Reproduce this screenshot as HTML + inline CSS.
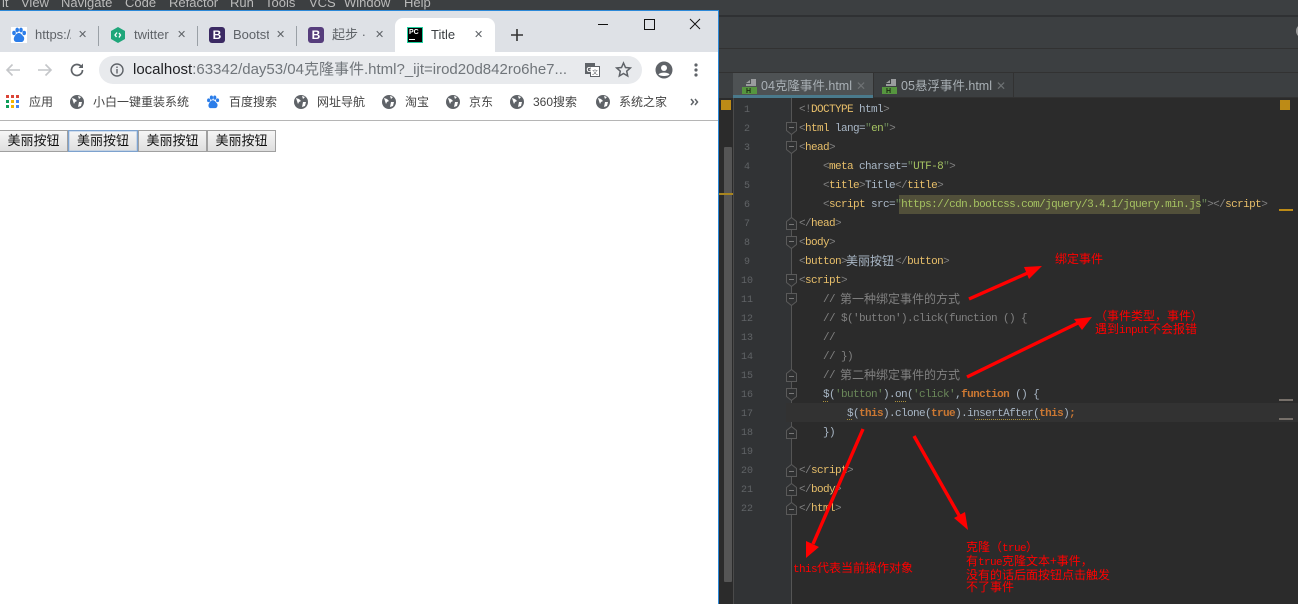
<!DOCTYPE html>
<html><head><meta charset="utf-8"><title>Title</title>
<style>
*{box-sizing:border-box}
html,body{margin:0;padding:0;width:1298px;height:604px;overflow:hidden;background:#2b2b2b;font-family:"Liberation Sans","Noto Sans CJK SC",sans-serif}
.a{position:absolute;white-space:nowrap}
#menu{left:0;top:0;width:1298px;height:10px;background:#3c3f41;overflow:hidden;color:#bbb;font-size:13px}
#menu span{position:absolute;top:-5px}
.tab{font-size:13px;color:#5f6368;top:27px;line-height:16px}
.x{font-size:11px;color:#5f6368;top:27px;line-height:16px}
.sep{width:1px;height:20px;background:#9aa0a6;top:26px}
.bm{font-size:12px;color:#444;top:95px;line-height:14px}
.globe{top:95px}
.btn{top:130px;height:22px;border:1px solid #a0a0a0;background:linear-gradient(#f6f6f6,#dedede);font-size:13px;line-height:20px;text-align:center;color:#111}
.ln{color:#606366;font:10px/19px "Liberation Mono",monospace;width:20px;left:737px;text-align:center;margin-top:1px}
.c{font:11px/19px "Liberation Mono","Noto Sans CJK SC",monospace;letter-spacing:-.6px;color:#a9b7c6;height:19px;margin-top:1px}
.t{color:#e8bf6a}.g{color:#6a8759}.n{color:#a9b7c6}.k{color:#cc7832;font-weight:bold}.m{color:#808080}.h{color:#a5c261}
.cj{font-family:"Noto Sans CJK SC",sans-serif;font-size:12px;line-height:1;letter-spacing:0;position:relative;top:1px;left:-1px}
.r{color:#f00;font-family:"Noto Sans CJK SC",sans-serif;font-size:12px;line-height:13px}
.r i{font:normal 11px "Liberation Mono",monospace;letter-spacing:-.6px}
</style></head><body>

<div class="a" id="menu">
<span style="left:2px">it</span><span style="left:21px">View</span><span style="left:61px">Navigate</span><span style="left:125px">Code</span><span style="left:169px">Refactor</span><span style="left:230px">Run</span><span style="left:265px">Tools</span><span style="left:309px">VCS</span><span style="left:344px">Window</span><span style="left:404px">Help</span>
</div>

<!-- IDE background -->
<div class="a" style="left:719px;top:10px;width:579px;height:88px;background:#3c3f41"></div>
<div class="a" style="left:0;top:15px;width:1298px;height:2px;background:#2f3133"></div>
<div class="a" style="left:719px;top:48px;width:579px;height:1px;background:#323232"></div>
<div class="a" style="left:719px;top:72px;width:579px;height:1px;background:#323232"></div>
<svg class="a" style="left:1290px;top:24px" width="8" height="14"><circle cx="13" cy="7" r="6" fill="none" stroke="#999" stroke-width="2"/></svg>

<!-- IDE tabs -->
<div class="a" style="left:719px;top:73px;width:14px;height:25px;background:#3c3f41"></div>
<div class="a" style="left:733px;top:73px;width:565px;height:25px;background:#3c3f41;border-bottom:1px solid #323232"></div>
<div class="a" style="left:733px;top:73px;width:140px;height:25px;background:#4e5254"></div>
<div class="a" style="left:733px;top:95px;width:140px;height:3px;background:#4a7a8c"></div>
<div class="a" style="left:873px;top:73px;width:1px;height:25px;background:#323232"></div>
<div class="a" style="left:1013px;top:73px;width:1px;height:25px;background:#323232"></div>
<svg class="a" style="left:742px;top:78px" width="16" height="17"><path d="M4 5l4-3v3zM9 1h5v7H4V6h5z" fill="#9a9c9e"/><rect x="0" y="9" width="15" height="7" fill="#56963f"/><text x="4" y="15" font-size="7" font-weight="bold" font-family="Liberation Sans" fill="#1c2a14">H</text></svg>
<svg class="a" style="left:882px;top:78px" width="16" height="17"><path d="M4 5l4-3v3zM9 1h5v7H4V6h5z" fill="#9a9c9e"/><rect x="0" y="9" width="15" height="7" fill="#56963f"/><text x="4" y="15" font-size="7" font-weight="bold" font-family="Liberation Sans" fill="#1c2a14">H</text></svg>
<div class="a" style="left:761px;top:78px;font-size:12.5px;line-height:16px;color:#a9b0b5">04克隆事件.html</div>
<div class="a" style="left:901px;top:78px;font-size:12.5px;line-height:16px;color:#a9b0b5">05悬浮事件.html</div>
<div class="a" style="left:856px;top:78px;font-size:12px;line-height:16px;color:#6e7274">✕</div>
<div class="a" style="left:996px;top:78px;font-size:12px;line-height:16px;color:#6e7274">✕</div>

<!-- editor -->
<div class="a" style="left:719px;top:98px;width:579px;height:506px;background:#2b2b2b"></div>
<div class="a" style="left:733px;top:98px;width:58px;height:506px;background:#313335;border-left:1px solid #4a4a4a"></div>
<div class="a" style="left:791px;top:98px;width:1px;height:506px;background:#555"></div>
<div class="a" style="left:786px;top:403px;width:512px;height:19px;background:#323232"></div>
<div class="a" style="left:1280px;top:100px;width:10px;height:10px;background:#bd8b16"></div>
<div class="a" style="left:721px;top:100px;width:10px;height:10px;background:#bd8b16"></div>
<div class="a" style="left:724px;top:147px;width:8px;height:435px;background:#555;border-radius:1px"></div>
<div class="a" style="left:719px;top:193px;width:14px;height:2px;background:#a8851f"></div>
<div class="a" style="left:1279px;top:209px;width:14px;height:2px;background:#bd8b16"></div>
<div class="a" style="left:1279px;top:399px;width:14px;height:2px;background:#77706a"></div>
<div class="a" style="left:1279px;top:418px;width:14px;height:2px;background:#77706a"></div>

<div class="a ln" style="top:100px">1</div><div class="a ln" style="top:119px">2</div><div class="a ln" style="top:138px">3</div><div class="a ln" style="top:157px">4</div><div class="a ln" style="top:176px">5</div><div class="a ln" style="top:195px">6</div><div class="a ln" style="top:214px">7</div><div class="a ln" style="top:233px">8</div><div class="a ln" style="top:252px">9</div><div class="a ln" style="top:271px">10</div><div class="a ln" style="top:290px">11</div><div class="a ln" style="top:309px">12</div><div class="a ln" style="top:328px">13</div><div class="a ln" style="top:347px">14</div><div class="a ln" style="top:366px">15</div><div class="a ln" style="top:385px">16</div><div class="a ln" style="top:404px">17</div><div class="a ln" style="top:423px">18</div><div class="a ln" style="top:442px">19</div><div class="a ln" style="top:461px">20</div><div class="a ln" style="top:480px">21</div><div class="a ln" style="top:499px">22</div>

<!-- fold markers -->
<svg class="a" style="left:780px;top:98px" width="24" height="506" viewBox="780 98 24 506">
<g fill="#2f3031" stroke="#5a5a5a" stroke-width="1">
<path d="M786.500 122.500h10v8l-5 4-5-4z"/><path d="M786.500 141.500h10v8l-5 4-5-4z"/>
<path d="M786.500 236.500h10v8l-5 4-5-4z"/><path d="M786.500 274.500h10v8l-5 4-5-4z"/>
<path d="M786.500 293.500h10v8l-5 4-5-4z"/><path d="M786.500 388.500h10v8l-5 4-5-4z"/>
<path d="M786.500 229.500h10v-8l-5-4-5 4z"/><path d="M786.500 381.500h10v-8l-5-4-5 4z"/>
<path d="M786.500 438.500h10v-8l-5-4-5 4z"/><path d="M786.500 476.500h10v-8l-5-4-5 4z"/>
<path d="M786.500 495.500h10v-8l-5-4-5 4z"/><path d="M786.500 514.500h10v-8l-5-4-5 4z"/>
</g>
<path d="M789 127.500h5M789 146.500h5M789 241.500h5M789 279.500h5M789 298.500h5M789 393.500h5M789 224.500h5M789 376.500h5M789 433.500h5M789 471.500h5M789 490.500h5M789 509.500h5" stroke="#777"/>
</svg>

<div class="a" style="left:899px;top:195px;width:301px;height:19px;background:#52503a"></div>

<div class="a c" style="left:799px;top:100px"><span class="m">&lt;!</span><span class="t">DOCTYPE</span> <span class="n">html</span><span class="m">&gt;</span></div>
<div class="a c" style="left:799px;top:119px"><span class="m">&lt;</span><span class="t">html</span> <span class="n">lang=</span><span class="g">"</span><span class="h">en</span><span class="g">"</span><span class="m">&gt;</span></div>
<div class="a c" style="left:799px;top:138px"><span class="m">&lt;</span><span class="t">head</span><span class="m">&gt;</span></div>
<div class="a c" style="left:823px;top:157px"><span class="m">&lt;</span><span class="t">meta</span> <span class="n">charset=</span><span class="g">"</span><span class="h">UTF-8</span><span class="g">"</span><span class="m">&gt;</span></div>
<div class="a c" style="left:823px;top:176px"><span class="m">&lt;</span><span class="t">title</span><span class="m">&gt;</span><span class="n">Title</span><span class="m">&lt;/</span><span class="t">title</span><span class="m">&gt;</span></div>
<div class="a c" style="left:823px;top:195px"><span class="m">&lt;</span><span class="t">script</span> <span class="n">src=</span><span class="g">"</span><span class="h">https://cdn.bootcss.com/jquery/3.4.1/jquery.min.js</span><span class="g">"</span><span class="m">&gt;&lt;/</span><span class="t">script</span><span class="m">&gt;</span></div>
<div class="a c" style="left:799px;top:214px"><span class="m">&lt;/</span><span class="t">head</span><span class="m">&gt;</span></div>
<div class="a c" style="left:799px;top:233px"><span class="m">&lt;</span><span class="t">body</span><span class="m">&gt;</span></div>
<div class="a c" style="left:799px;top:252px"><span class="m">&lt;</span><span class="t">button</span><span class="m">&gt;</span><span class="cj">美丽按钮</span><span class="m">&lt;/</span><span class="t">button</span><span class="m">&gt;</span></div>
<div class="a c" style="left:799px;top:271px"><span class="m">&lt;</span><span class="t">script</span><span class="m">&gt;</span></div>
<div class="a c" style="left:823px;top:290px;color:#808080">// <span class="cj">第一种绑定事件的方式</span></div>
<div class="a c" style="left:823px;top:309px;color:#808080">// $('button').click(function () {</div>
<div class="a c" style="left:823px;top:328px;color:#808080">//</div>
<div class="a c" style="left:823px;top:347px;color:#808080">// })</div>
<div class="a c" style="left:823px;top:366px;color:#808080">// <span class="cj">第二种绑定事件的方式</span></div>
<div class="a c" style="left:823px;top:385px"><span class="n">$(</span><span class="g">'button'</span><span class="n">).on(</span><span class="g">'click'</span><span class="n">,</span><span class="k">function</span> <span class="n">() {</span></div>
<div class="a c" style="left:847px;top:404px"><span class="n">$(</span><span class="k">this</span><span class="n">).clone(</span><span class="k">true</span><span class="n">).insertAfter(</span><span class="k">this</span><span class="n">)</span><span class="k">;</span></div>
<div class="a c" style="left:823px;top:423px">})</div>
<div class="a c" style="left:799px;top:461px"><span class="m">&lt;/</span><span class="t">script</span><span class="m">&gt;</span></div>
<div class="a c" style="left:799px;top:480px"><span class="m">&lt;/</span><span class="t">body</span><span class="m">&gt;</span></div>
<div class="a c" style="left:799px;top:499px"><span class="m">&lt;/</span><span class="t">html</span><span class="m">&gt;</span></div>

<!-- annotations -->
<svg class="a" style="left:719px;top:98px" width="579" height="506" viewBox="719 98 579 506">
<g stroke="#a98f3c" stroke-width="1" stroke-dasharray="1 1"><path d="M823 401.500h6M895 401.500h12M847 419.500h6M975 419.500h65"/></g>
<g stroke="#f00" stroke-width="3.400" fill="none">
<path d="M969 299L1030 272"/><path d="M967 377L1080 322"/><path d="M863 429L813 544"/><path d="M914 436L960 517"/>
</g>
<g fill="#f00">
<polygon points="1042,266 1029,279 1024,267"/>
<polygon points="1092,317 1082,330 1074,319"/>
<polygon points="806,558 806,541 819,547"/>
<polygon points="968,530 954,518 965,512"/>
</g>
</svg>
<div class="a r" style="left:1055px;top:252px">绑定事件</div>
<div class="a r" style="left:1095px;top:309px">（事件类型，事件）<br>遇到<i>input</i>不会报错</div>
<div class="a r" style="left:793px;top:561px"><i>this</i>代表当前操作对象</div>
<div class="a r" style="left:966px;top:541px;line-height:12px">克隆（<i>true</i>）<br>有<i>true</i>克隆文本+事件，<br>没有的话后面按钮点击触发<br>不了事件</div>

<!-- Browser -->
<div class="a" style="left:0;top:10px;width:719px;height:594px;background:#fff;border-top:1px solid #2b88d8;border-right:1px solid #2b88d8"></div>
<div class="a" style="left:0;top:11px;width:718px;height:41px;background:#dee1e6"></div>
<div class="a" style="left:395px;top:18px;width:100px;height:34px;background:#fff;border-radius:8px 8px 0 0"></div>

<!-- tab icons -->
<svg class="a" style="left:11px;top:27px" width="16" height="16" viewBox="0 0 16 16"><rect width="16" height="16" fill="#fff"/><g fill="#2b7de9"><ellipse cx="3" cy="6" rx="1.800" ry="2.200"/><ellipse cx="6.200" cy="3" rx="1.800" ry="2.400"/><ellipse cx="10" cy="3" rx="1.800" ry="2.400"/><ellipse cx="13.200" cy="6" rx="1.800" ry="2.200"/><path d="M8 6c2 0 3 2 4.500 3.500S13 15 10.500 15H5.500C3 15 2 12 3.500 9.500S6 6 8 6z"/></g></svg>
<svg class="a" style="left:110px;top:27px" width="16" height="16" viewBox="0 0 16 16"><polygon points="8,0 15,4 15,12 8,16 1,12 1,4" fill="#1fa67a"/><path d="M7 5.500L5 8l1.500 2M9 6l1.500 2L9 10.500" stroke="#fff" stroke-width="1.300" fill="none"/></svg>
<div class="a" style="left:209px;top:27px;width:16px;height:16px;border-radius:3px;background:#3b2a63;color:#fff;font:bold 12px/16px 'Liberation Sans';text-align:center">B</div>
<div class="a" style="left:308px;top:27px;width:16px;height:16px;border-radius:3px;background:#563d7c;color:#fff;font:bold 12px/16px 'Liberation Sans';text-align:center">B</div>
<div class="a" style="left:407px;top:27px;width:16px;height:16px;background:#000;border:1px solid #1fd1a0;color:#fff;font:bold 7px/9px 'Liberation Sans';padding-left:1px">PC<div style="width:6px;height:1px;background:#fff;margin-top:2px"></div></div>

<div class="a tab" style="left:35px;width:36px;overflow:hidden">https://</div>
<div class="a tab" style="left:134px;width:36px;overflow:hidden">twitter</div>
<div class="a tab" style="left:233px;width:36px;overflow:hidden">Bootst</div>
<div class="a tab" style="left:332px;width:34px;overflow:hidden">起步 ·</div>
<div class="a tab" style="left:431px;color:#3c4043">Title</div>
<div class="a x" style="left:78px">✕</div><div class="a x" style="left:177px">✕</div><div class="a x" style="left:276px">✕</div><div class="a x" style="left:375px">✕</div><div class="a x" style="left:474px">✕</div>
<div class="a sep" style="left:98px"></div><div class="a sep" style="left:197px"></div><div class="a sep" style="left:296px"></div>
<svg class="a" style="left:510px;top:28px" width="14" height="14"><path d="M7 1v12M1 7h12" stroke="#333" stroke-width="1.600"/></svg>
<svg class="a" style="left:590px;top:16px" width="120" height="16"><path d="M8 8.500h10" stroke="#111"/><rect x="54.500" y="3.500" width="10" height="10" fill="none" stroke="#111"/><path d="M100 3l10 10M110 3L100 13" stroke="#111"/></svg>

<!-- toolbar -->
<svg class="a" style="left:5px;top:61px" width="82" height="18" fill="none"><path d="M15 9H2M7.500 3.500L2 9l5.500 5.500" stroke="#c4c6c9" stroke-width="1.600"/><path d="M33 9h13M40.500 3.500L46 9l-5.500 5.500" stroke="#c4c6c9" stroke-width="1.600"/><path d="M77.500 9a5.500 5.500 0 1 1-1.600-3.900" stroke="#5f6368" stroke-width="1.700"/><path d="M78 2.500v4.500h-4.500z" fill="#5f6368"/></svg>
<div class="a" style="left:99px;top:56px;width:543px;height:28px;border-radius:14px;background:#e8eaed"></div>
<svg class="a" style="left:109px;top:62px" width="16" height="16" fill="none"><circle cx="8" cy="8" r="6" stroke="#5f6368" stroke-width="1.400"/><path d="M8 7v4.500M8 4.500v1.500" stroke="#5f6368" stroke-width="1.400"/></svg>
<div class="a" style="left:133px;top:61px;font-size:15px;line-height:17px;color:#70757a"><span style="color:#202124">localhost</span>:63342/day53/04克隆事件.html?_ijt=irod20d842ro6he7...</div>
<svg class="a" style="left:584px;top:61px" width="17" height="17"><rect x="1" y="2" width="10" height="11" fill="#5f6368"/><rect x="6.500" y="5.500" width="9" height="10" fill="#fff" stroke="#5f6368"/><text x="2.500" y="11" font-size="7" font-weight="bold" font-family="Liberation Sans" fill="#fff">G</text><text x="8" y="13.500" font-size="6" font-family="Noto Sans CJK SC" fill="#5f6368">文</text></svg>
<svg class="a" style="left:615px;top:61px" width="17" height="17" fill="none"><path d="M8.500 2l2 4.500 4.800.5-3.600 3.200 1 4.800-4.200-2.500-4.200 2.500 1-4.800L1.700 7l4.800-.5z" stroke="#5f6368" stroke-width="1.500"/></svg>
<svg class="a" style="left:655px;top:61px" width="18" height="18"><circle cx="9" cy="9" r="8.500" fill="#5f6368"/><circle cx="9" cy="7" r="3" fill="#fff"/><path d="M3.500 13.500C5 11 13 11 14.500 13.500 13 15.500 5 15.500 3.500 13.500z" fill="#fff"/></svg>
<svg class="a" style="left:693px;top:62px" width="6" height="16" fill="#5f6368"><circle cx="3" cy="3" r="1.600"/><circle cx="3" cy="8" r="1.600"/><circle cx="3" cy="13" r="1.600"/></svg>

<!-- bookmarks -->
<svg class="a" style="left:6px;top:95px" width="14" height="14"><g fill="#db4437"><rect width="3" height="3"/><rect x="5" width="3" height="3"/></g><rect x="10" width="3" height="3" fill="#db4437"/><rect y="5" width="3" height="3" fill="#0f9d58"/><rect x="5" y="5" width="3" height="3" fill="#f4b400"/><rect x="10" y="5" width="3" height="3" fill="#4285f4"/><rect y="10" width="3" height="3" fill="#0f9d58"/><rect x="5" y="10" width="3" height="3" fill="#f4b400"/><rect x="10" y="10" width="3" height="3" fill="#4285f4"/></svg>
<div class="a bm" style="left:29px">应用</div>
<svg class="a globe" style="left:70px" width="14" height="14"><circle cx="7" cy="7" r="7" fill="#5f6368"/><path d="M2 3l3 1 2 2-2 1-1 2zM8 1l3 1-2 2zM9 7l3 0-1 4-3 1z" fill="#fff"/></svg><div class="a bm" style="left:93px">小白一键重装系统</div>
<svg class="a" style="left:206px;top:95px" width="14" height="14" viewBox="0 0 16 16"><g fill="#2b7de9"><ellipse cx="3" cy="6" rx="1.800" ry="2.200"/><ellipse cx="6.200" cy="3" rx="1.800" ry="2.400"/><ellipse cx="10" cy="3" rx="1.800" ry="2.400"/><ellipse cx="13.200" cy="6" rx="1.800" ry="2.200"/><path d="M8 6c2 0 3 2 4.500 3.500S13 15 10.500 15H5.500C3 15 2 12 3.500 9.500S6 6 8 6z"/></g></svg>
<div class="a bm" style="left:229px">百度搜索</div>
<svg class="a globe" style="left:294px" width="14" height="14"><circle cx="7" cy="7" r="7" fill="#5f6368"/><path d="M2 3l3 1 2 2-2 1-1 2zM8 1l3 1-2 2zM9 7l3 0-1 4-3 1z" fill="#fff"/></svg><div class="a bm" style="left:317px">网址导航</div>
<svg class="a globe" style="left:382px" width="14" height="14"><circle cx="7" cy="7" r="7" fill="#5f6368"/><path d="M2 3l3 1 2 2-2 1-1 2zM8 1l3 1-2 2zM9 7l3 0-1 4-3 1z" fill="#fff"/></svg><div class="a bm" style="left:405px">淘宝</div>
<svg class="a globe" style="left:446px" width="14" height="14"><circle cx="7" cy="7" r="7" fill="#5f6368"/><path d="M2 3l3 1 2 2-2 1-1 2zM8 1l3 1-2 2zM9 7l3 0-1 4-3 1z" fill="#fff"/></svg><div class="a bm" style="left:469px">京东</div>
<svg class="a globe" style="left:510px" width="14" height="14"><circle cx="7" cy="7" r="7" fill="#5f6368"/><path d="M2 3l3 1 2 2-2 1-1 2zM8 1l3 1-2 2zM9 7l3 0-1 4-3 1z" fill="#fff"/></svg><div class="a bm" style="left:533px">360搜索</div>
<svg class="a globe" style="left:596px" width="14" height="14"><circle cx="7" cy="7" r="7" fill="#5f6368"/><path d="M2 3l3 1 2 2-2 1-1 2zM8 1l3 1-2 2zM9 7l3 0-1 4-3 1z" fill="#fff"/></svg><div class="a bm" style="left:619px">系统之家</div>
<svg class="a" style="left:690px;top:98px" width="9" height="8" fill="none"><path d="M1 1l2.500 3L1 7M5 1l2.500 3L5 7" stroke="#5f6368" stroke-width="1.500"/></svg>
<div class="a" style="left:0;top:120px;width:718px;height:1px;background:#b5b5b5"></div>

<!-- buttons -->
<div class="a btn" style="left:-1px;width:69px">美丽按钮</div>
<div class="a btn" style="left:138px;width:69px">美丽按钮</div>
<div class="a btn" style="left:207px;width:69px">美丽按钮</div>
<div class="a btn" style="left:68px;width:70px;border:1px solid #7da2ce;box-shadow:inset 0 0 0 .5px #a8c4e6">美丽按钮</div>
</body></html>
